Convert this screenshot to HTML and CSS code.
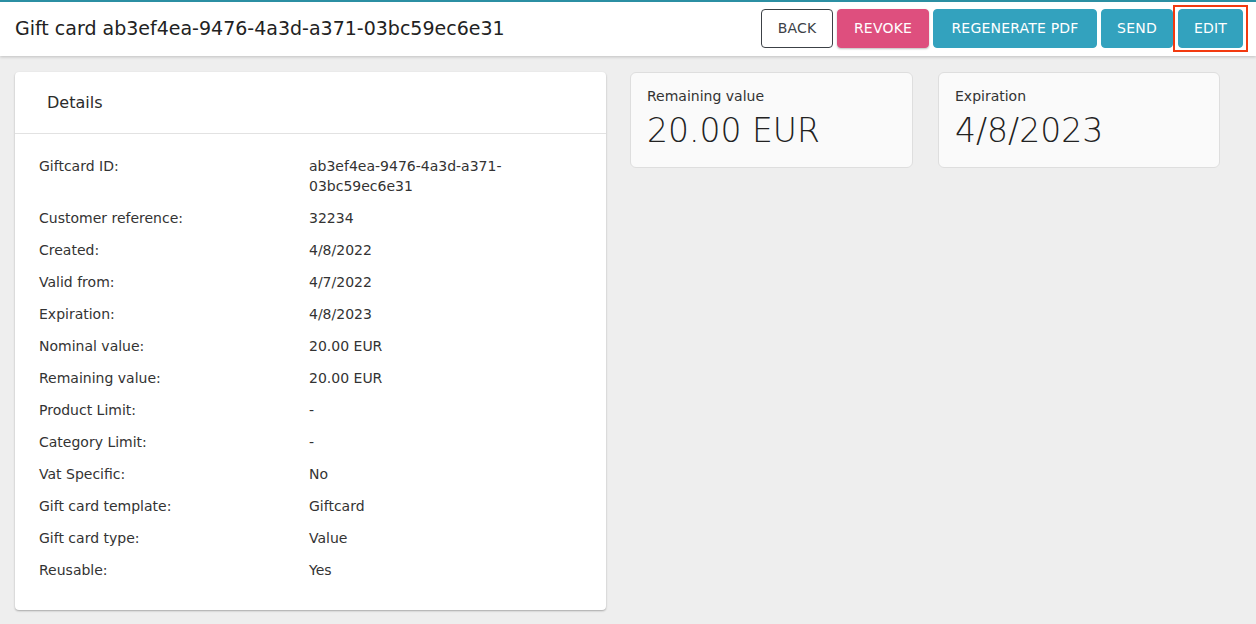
FILE: index.html
```html
<!DOCTYPE html>
<html lang="en">
<head>
<meta charset="utf-8">
<title>Gift card</title>
<link rel="stylesheet" href="styles.css">
</head>
<body>
<header class="topbar">
  <h1 class="title">Gift card ab3ef4ea-9476-4a3d-a371-03bc59ec6e31</h1>
  <div class="actions">
    <button class="btn btn-outline">BACK</button>
    <button class="btn btn-pink">REVOKE</button>
    <button class="btn btn-teal btn-wide">REGENERATE PDF</button>
    <button class="btn btn-teal btn-send">SEND</button>
    <button class="btn btn-teal btn-edit">EDIT</button>
  </div>
</header>
<main class="content">
  <section class="card details">
    <div class="card-head">Details</div>
    <div class="card-body">
      <div class="row"><div class="label">Giftcard ID:</div><div class="value">ab3ef4ea-9476-4a3d-a371-<br>03bc59ec6e31</div></div>
      <div class="row"><div class="label">Customer reference:</div><div class="value">32234</div></div>
      <div class="row"><div class="label">Created:</div><div class="value">4/8/2022</div></div>
      <div class="row"><div class="label">Valid from:</div><div class="value">4/7/2022</div></div>
      <div class="row"><div class="label">Expiration:</div><div class="value">4/8/2023</div></div>
      <div class="row"><div class="label">Nominal value:</div><div class="value">20.00 EUR</div></div>
      <div class="row"><div class="label">Remaining value:</div><div class="value">20.00 EUR</div></div>
      <div class="row"><div class="label">Product Limit:</div><div class="value">-</div></div>
      <div class="row"><div class="label">Category Limit:</div><div class="value">-</div></div>
      <div class="row"><div class="label">Vat Specific:</div><div class="value">No</div></div>
      <div class="row"><div class="label">Gift card template:</div><div class="value">Giftcard</div></div>
      <div class="row"><div class="label">Gift card type:</div><div class="value">Value</div></div>
      <div class="row"><div class="label">Reusable:</div><div class="value">Yes</div></div>
    </div>
  </section>
  <section class="stat">
    <div class="stat-label">Remaining value</div>
    <div class="stat-value">20.00 EUR</div>
  </section>
  <section class="stat stat-second">
    <div class="stat-label">Expiration</div>
    <div class="stat-value">4/8/2023</div>
  </section>
</main>
</body>
</html>
```
FILE: styles.css
```css
* { box-sizing: border-box; }
html, body { margin: 0; padding: 0; }
body {
  background: #eeeeee;
  font-family: "DejaVu Sans", "Noto Sans", sans-serif;
  color: #2b2b2b;
  height: 624px;
  overflow: hidden;
}
.topbar {
  height: 56px;
  background: #ffffff;
  border-top: 2px solid #2b8fa3;
  display: flex;
  align-items: center;
  justify-content: space-between;
  padding: 0 13px 2px 15px;
  box-shadow: 0 1px 3px rgba(0,0,0,0.2);
  position: relative;
  z-index: 1;
}
.title {
  margin: 0;
  font-size: 19px;
  font-weight: 400;
  color: #222;
}
.actions {
  display: flex;
  gap: 4px;
  align-items: center;
}
.btn {
  height: 39px;
  padding: 0;
  border-radius: 4px;
  font-family: inherit;
  font-size: 14px;
  letter-spacing: 0.2px;
  border: 1px solid transparent;
  color: #ffffff;
  cursor: pointer;
}
.btn-outline {
  background: #ffffff;
  border-color: #3c4146;
  color: #3c4146;
  width: 72px;
}
.btn-pink {
  background: #de4f7e;
  border-color: #de4f7e;
  width: 92px;
  box-shadow: 0 1px 2px rgba(0,0,0,0.25);
}
.btn-teal { background: #33a2be; border-color: #33a2be; }
.btn-wide { width: 164px; }
.btn-send { width: 72px; }
.btn-edit {
  width: 65px;
  margin-left: 1px;
  position: relative;
}
.btn-edit::after {
  content: "";
  position: absolute;
  left: -6px;
  right: -6px;
  top: -5px;
  bottom: -5px;
  border: 2px solid #f23a10;
  pointer-events: none;
}
.content {
  display: flex;
  align-items: flex-start;
  padding: 16px 15px;
  gap: 24px;
}
.card {
  background: #ffffff;
  border-radius: 4px;
  box-shadow: 0 1px 2px rgba(0,0,0,0.3);
}
.details { width: 591px; }
.card-head {
  height: 62px;
  padding: 0 32px 0;
  display: flex;
  align-items: center;
  font-size: 16px;
  border-bottom: 1px solid #e2e2e2;
}
.card-body {
  padding: 22px 24px 18px;
}
.row {
  display: grid;
  grid-template-columns: 270px 1fr;
  font-size: 14px;
  line-height: 20px;
  margin-bottom: 12px;
  color: #333;
}
.stat {
  width: 283px;
  height: 96px;
  background: #fafafa;
  border: 1px solid #dedede;
  border-radius: 6px;
  padding: 14px 16px;
}
.stat-second { margin-left: 1px; width: 282px; }
.stat-label {
  font-size: 14px;
  line-height: 18px;
  color: #333;
}
.stat-value {
  font-size: 33px;
  line-height: 44px;
  margin-top: 4px;
  color: #222;
  font-weight: 300;
}
```
